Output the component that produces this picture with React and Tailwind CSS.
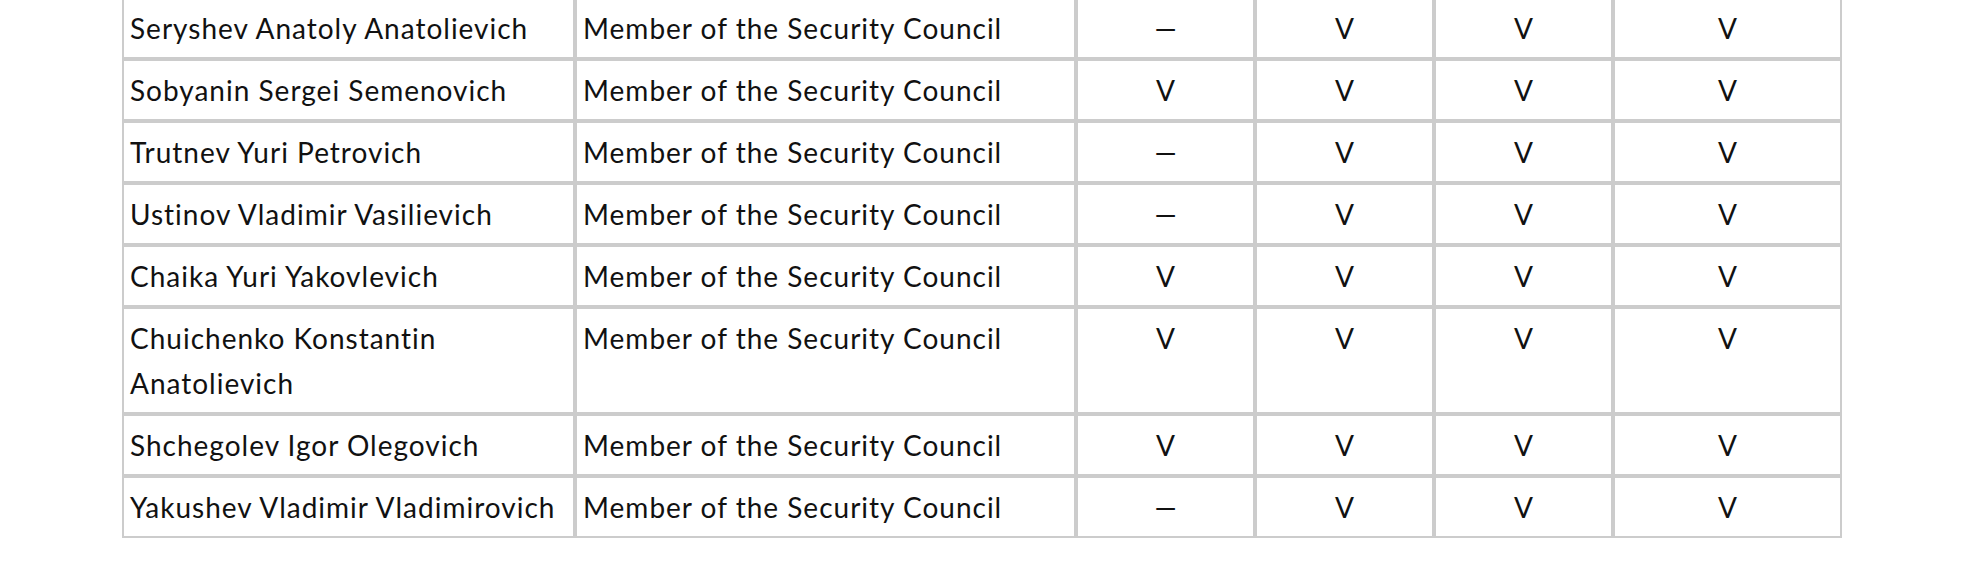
const ROWS = [
  ["Seryshev Anatoly Anatolievich", false, true, true, true],
  ["Sobyanin Sergei Semenovich", true, true, true, true],
  ["Trutnev Yuri Petrovich", false, true, true, true],
  ["Ustinov Vladimir Vasilievich", false, true, true, true],
  ["Chaika Yuri Yakovlevich", true, true, true, true],
  ["Chuichenko Konstantin Anatolievich", true, true, true, true],
  ["Shchegolev Igor Olegovich", true, true, true, true],
  ["Yakushev Vladimir Vladimirovich", false, true, true, true],
];

const cell = "border-2 border-[#cccccc] px-[6px] py-[6.5px] align-top";

function Mark({ on }) {
  return <span className="tracking-normal">{on ? "V" : "—"}</span>;
}

export default function App() {
  return (
    <div className="min-h-screen bg-white pl-[122px] font-['Lato','Open_Sans',sans-serif] text-[28px] leading-[45px] tracking-[1px] text-[#111]">
      <table className="-mt-[3px] w-[1720px] table-fixed border-separate border-spacing-0">
        <colgroup>
          <col className="w-[453px]" />
          <col className="w-[501px]" />
          <col className="w-[179px]" />
          <col className="w-[179px]" />
          <col className="w-[179px]" />
          <col className="w-[229px]" />
        </colgroup>
        <tbody>
          {ROWS.map(([name, ...marks]) => (
            <tr key={name}>
              <td className={cell}>{name}</td>
              <td className={cell}>Member of the Security Council</td>
              {marks.map((m, i) => (
                <td key={i} className={`${cell} text-center`}>
                  <Mark on={m} />
                </td>
              ))}
            </tr>
          ))}
        </tbody>
      </table>
    </div>
  );
}
